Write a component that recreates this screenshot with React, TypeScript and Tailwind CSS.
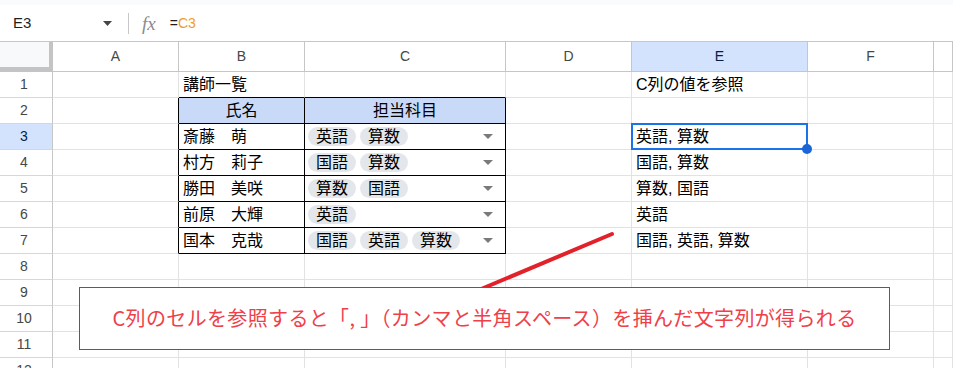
import React from 'react';

const COLS = ['A', 'B', 'C', 'D', 'E', 'F', 'G'];
const GRID = 'grid grid-cols-[53px_126px_126px_201px_126px_176px_126px_1fr]';
const FONT = { fontFamily: '"Liberation Sans", Arial, "Noto Sans CJK JP", sans-serif' };

type Cell = { text?: string; chips?: string[]; header?: boolean };

const sheet: Record<number, Record<string, Cell>> = {
  1: { B: { text: '講師一覧' }, E: { text: 'C列の値を参照' } },
  2: { B: { text: '氏名', header: true }, C: { text: '担当科目', header: true } },
  3: { B: { text: '斎藤　萌' }, C: { chips: ['英語', '算数'] }, E: { text: '英語, 算数' } },
  4: { B: { text: '村方　莉子' }, C: { chips: ['国語', '算数'] }, E: { text: '国語, 算数' } },
  5: { B: { text: '勝田　美咲' }, C: { chips: ['算数', '国語'] }, E: { text: '算数, 国語' } },
  6: { B: { text: '前原　大輝' }, C: { chips: ['英語'] }, E: { text: '英語' } },
  7: { B: { text: '国本　克哉' }, C: { chips: ['国語', '英語', '算数'] }, E: { text: '国語, 英語, 算数' } },
};

const ROWS = [1, 2, 3, 4, 5, 6, 7, 8, 9, 10, 11, 12];

const DropArrow = () => (
  <svg width="10" height="5" viewBox="0 0 10 5" className="ml-auto mr-[12px] shrink-0">
    <path d="M0 0h10L5 5z" fill="#7a7a7a" />
  </svg>
);

const SheetCell = ({ col, row }: { col: string; row: number }) => {
  const cell = sheet[row]?.[col];
  const isTable = (col === 'B' || col === 'C') && row >= 2 && row <= 7;
  const rightBlack = isTable || (col === 'A' && row >= 2 && row <= 7);
  const bottomBlack = (col === 'B' || col === 'C') && row <= 7;
  const selected = col === 'E' && row === 3;

  return (
    <div
      className={`relative flex items-center h-[26px] border-r border-b text-[16px] text-black leading-[20px] whitespace-nowrap ${
        rightBlack ? 'border-r-black' : 'border-r-[#e2e2e2]'
      } ${bottomBlack ? 'border-b-black' : 'border-b-[#e2e2e2]'} ${
        cell?.header ? 'bg-[#c9daf8] justify-center' : 'bg-white'
      }`}
    >
      {cell?.text && <span className={cell.header ? 'pt-[1px]' : 'pl-[4px] pt-[1px]'}>{cell.text}</span>}
      {cell?.chips && (
        <>
          <div className="flex gap-[4px] pl-[3px]">
            {cell.chips.map((c, i) => (
              <span key={i} className="h-[19px] leading-[19px] px-[8px] rounded-full bg-[#e3e7ec]">
                {c}
              </span>
            ))}
          </div>
          <DropArrow />
        </>
      )}
      {selected && (
        <div className="absolute -left-[1px] -top-[1px] -right-[1px] -bottom-[1px] border-2 border-[#1a73e8] z-10">
          <div className="absolute -right-[6px] -bottom-[6px] w-[10px] h-[10px] rounded-full bg-[#1a66d6]" />
        </div>
      )}
    </div>
  );
};

export default function App() {
  return (
    <div className="relative w-[953px] h-[368px] overflow-hidden bg-white" style={FONT}>
      <div className="h-[5px] bg-[#f9fbfd]" />
      <div className="flex items-center h-[37px] border-b border-[#c7c7c7] text-[14px] text-[#1f1f1f]">
        <span className="pl-[13px] w-[103px] text-[15px]">E3</span>
        <svg width="9" height="5" viewBox="0 0 9 5">
          <path d="M0 0h9L4.5 5z" fill="#444746" />
        </svg>
        <div className="ml-[16px] w-px h-[21px] bg-[#c7c7c7]" />
        <span
          className="ml-[13px] italic text-[19px] text-[#8a8a8a] leading-none"
          style={{ fontFamily: '"Liberation Serif", serif' }}
        >
          fx
        </span>
        <span className="ml-[14px]">
          =<span className="text-[#f29b2c]">C3</span>
        </span>
      </div>

      <div className={`${GRID} h-[30px]`}>
        <div className="bg-[#f8f9fa] border-r-[4px] border-b-[5px] border-[#c4c4c4]" />
        {COLS.map((c) => (
          <div
            key={c}
            className={`flex items-center justify-center border-r border-b border-[#c4c7c5] text-[14px] ${
              c === 'E' ? 'bg-[#d3e3fd] text-[#041e49]' : 'bg-white text-[#444746]'
            }`}
          >
            {c === 'G' ? '' : c}
          </div>
        ))}
      </div>

      {ROWS.map((r) => (
        <div key={r} className={GRID}>
          <div
            className={`flex items-center justify-center pr-[4px] h-[26px] border-r border-b border-r-[#c4c7c5] border-b-[#d6d6d6] text-[14px] ${
              r === 3 ? 'bg-[#d3e3fd] text-[#041e49]' : 'bg-white text-[#444746]'
            }`}
          >
            {r}
          </div>
          {COLS.map((c) => (
            <SheetCell key={c} col={c} row={r} />
          ))}
        </div>
      ))}

      <svg className="absolute left-0 top-0 pointer-events-none" width="953" height="368">
        <line x1="612" y1="234" x2="474" y2="292" stroke="#e3212b" strokeWidth="4" strokeLinecap="round" />
      </svg>

      {/* callout: red frame drawn as a 1px padded wrapper */}
      <div className="absolute left-[79px] top-[287px] w-[811px] h-[63px] p-px bg-[#e3212b]">
        <div
          className="flex items-center justify-center w-full h-full bg-white text-[20px] tracking-[0.35px] text-[#ef4049] pb-[2px]"
          style={{ fontFamily: '"Noto Sans CJK JP", sans-serif' }}
        >
          C列のセルを参照すると「, 」（カンマと半角スペース）を挿んだ文字列が得られる
        </div>
      </div>
    </div>
  );
}
